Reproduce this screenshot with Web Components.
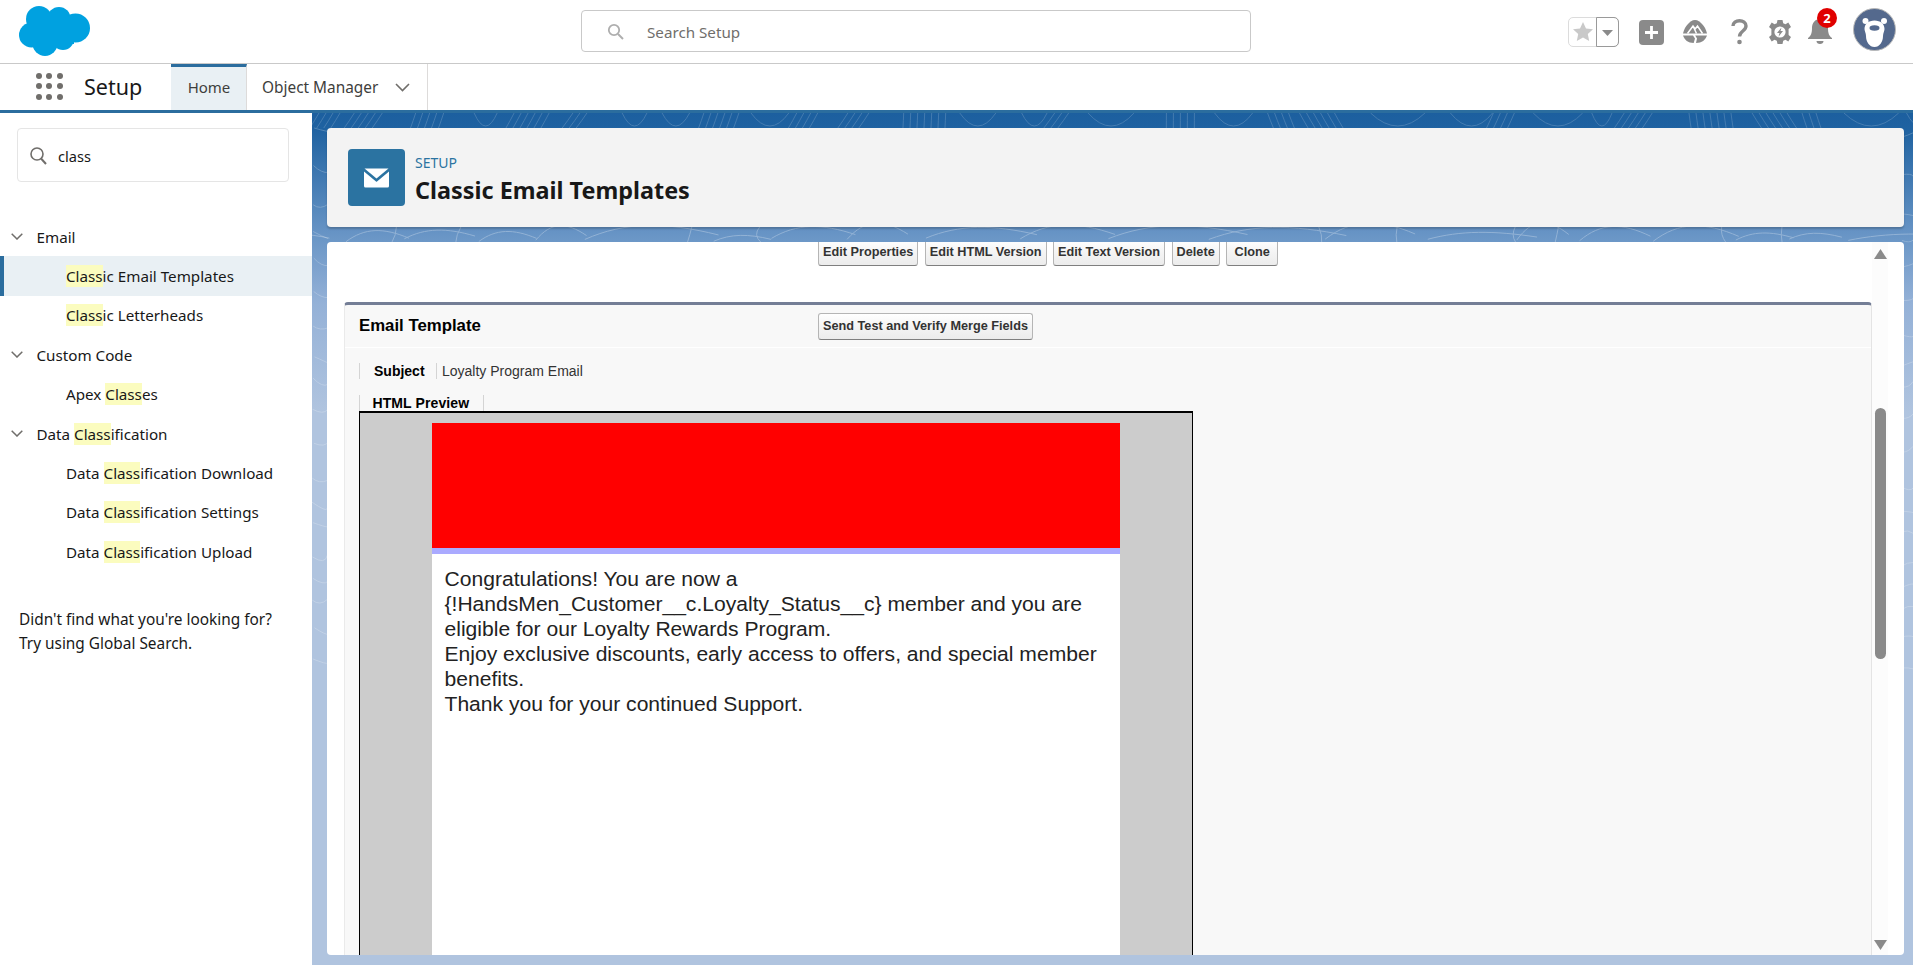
<!doctype html>
<html lang="en">
<head>
<meta charset="utf-8">
<title>Classic Email Templates</title>
<style>
  html, body { margin: 0; height: 100%; overflow: hidden; background: #fff; }
  body { font-family: "Noto Sans", "Open Sans", sans-serif; color: #181818; }
</style>
</head>
<body>
<setup-app></setup-app>
<script>
const SF_FONT = '"Noto Sans", "Open Sans", sans-serif';
const CL_FONT = '"Liberation Sans", Arial, sans-serif';

class GlobalHeader extends HTMLElement {
  constructor() {
    super();
    this.attachShadow({ mode: 'open' });
    this.shadowRoot.innerHTML = `
      <style>
        :host { display: flex; align-items: center; height: 63px; border-bottom: 1px solid #c9c9c9; position: relative; background: #fff; }
        .logo { margin-left: 19px; width: 72px; height: 50px; align-self: flex-start; margin-top: 6px; }
        .search { position: absolute; left: 581px; top: 10px; width: 670px; height: 42px; box-sizing: border-box; border: 1px solid #c9c9c9; border-radius: 4px; display: flex; align-items: center; padding: 1px 0 0 25px; color: #706e6b; font: 15.200px ${SF_FONT}; }
        .search svg { width: 17px; height: 17px; margin-right: 23px; }
        .tools { margin-left: auto; display: flex; align-items: center; margin-right: 17px; }
        .fav { display: flex; width: 51px; height: 30px; box-sizing: border-box; border: 1px solid #dcdcdc; border-radius: 5px; }
        .fav span { display: flex; align-items: center; justify-content: center; }
        .fav .s { width: 28px; }
        .fav .c { flex: 1; border: 1px solid #9a9a9a; border-radius: 0 5px 5px 0; margin: -1px; padding-top: 3px; box-sizing: border-box; }
        .tool { display: block; }
        .bell { position: relative; }
        .badge { position: absolute; left: 9px; top: -11px; width: 20px; height: 20px; border-radius: 50%; background: #e00000; color: #fff; font: 700 13px/20px ${SF_FONT}; text-align: center; }
      </style>
      <svg class="logo" viewBox="0 0 72 50"><g fill="#00a1e0"><circle cx="20" cy="13" r="13"/><circle cx="40" cy="12.500" r="11.500"/><circle cx="56.500" cy="22" r="14.500"/><circle cx="12.500" cy="29" r="12.500"/><circle cx="26" cy="37.500" r="12.500"/><circle cx="44" cy="33" r="11"/><rect x="15" y="12" width="40" height="26"/></g></svg>
      <div class="search">
        <svg viewBox="0 0 17 17"><circle cx="7" cy="7" r="5.200" fill="none" stroke="#aeaeae" stroke-width="1.800"/><path d="M11 11l5 5" stroke="#aeaeae" stroke-width="2"/></svg>
        <span>Search Setup</span>
      </div>
      <div class="tools">
        <div class="fav">
          <span class="s"><svg width="20" height="19" viewBox="0 0 20 19"><path fill="#c9c9c9" d="M10 0l3 6.500 7 .8-5.200 4.700 1.400 7L10 15.500 3.800 19l1.400-7L0 7.300l7-.8z"/></svg></span>
          <span class="c"><svg width="11" height="6" viewBox="0 0 11 6"><path fill="#8a8a8a" d="M0 0h11L5.500 6z"/></svg></span>
        </div>
        <svg class="tool" style="margin:2px 0 0 20px" width="26" height="26" viewBox="0 0 26 26"><rect width="25" height="25" rx="4" fill="#8a8a8a"/><path d="M12.500 6v13M6 12.500h13" stroke="#fff" stroke-width="2.800"/></svg>
        <svg class="tool" style="margin:0 0 0 18px" width="24" height="23" viewBox="0 0 24 23"><path fill="#8a8a8a" d="M12 0c3 0 5 2 7 4 2 2 4 5 5 9.500H0C1 9 3 6 5 4c2-2 4-4 7-4z"/><path fill="none" stroke="#fff" stroke-width="1.500" d="M4.500 13.500L10 6l2.200 3L14.500 6l5 7.500M10 6l3.500 7.500"/><path fill="#8a8a8a" d="M0 15.500h10l2 3-1.300 4.500C5 23 1.500 20 0 15.500zM14 15.500h10C22.500 20 19 23 13 23l1-4.500-1.800-3z"/></svg>
        <svg class="tool" style="margin:0 0 0 24px" width="17" height="26" viewBox="0 0 17 26"><path fill="none" stroke="#8a8a8a" stroke-width="3.400" d="M2 7c0-3.500 3-5.300 6.500-5.300S15 3.700 15 7c0 5-6.500 5-6.500 10.500"/><circle cx="8.500" cy="23" r="2.300" fill="#8a8a8a"/></svg>
        <svg class="tool" style="margin:0 0 0 21px" width="22" height="24" viewBox="0 0 22 24"><path fill="#8a8a8a" d="M8.500 0h5l.7 3.200 2.300 1L19.300 2.600l2.700 4.400-2.400 2.100v5.800l2.400 2.100-2.700 4.400-2.800-1.600-2.300 1-.7 3.200h-5l-.7-3.200-2.300-1-2.800 1.600L0 17l2.400-2.100V9.100L0 7l2.700-4.400 2.800 1.600 2.300-1z"/><circle cx="11" cy="12" r="5.600" fill="#fff"/><path fill="#8a8a8a" d="M12.500 7.500L8 13h2.500l-1 3.800L14 11h-2.500z"/></svg>
        <div class="bell" style="margin-left:17px">
          <svg class="tool" width="24" height="25" viewBox="0 0 24 25"><path fill="#8a8a8a" d="M12 0c5 0 8 4 8 9 0 5 1 8 4 10v1H0v-1c3-2 4-5 4-10 0-5 3-9 8-9z"/><path fill="#8a8a8a" d="M8.500 22h7c0 1.800-1.500 3-3.500 3s-3.500-1.200-3.500-3z"/></svg>
          <div class="badge">2</div>
        </div>
        <svg class="tool" style="margin:0 0 5px 21px" width="43" height="43" viewBox="0 0 43 43"><circle cx="21.500" cy="21.500" r="21" fill="#54698d" stroke="#b8b8b8"/><circle cx="12.500" cy="13" r="3" fill="#fff"/><circle cx="31" cy="13" r="3" fill="#fff"/><path fill="#fff" d="M21.500 12.500c6 0 10 3.500 10 8.500 0 2-1.500 4-1.500 7 0 6-3.500 11-8.500 11S13 34 13 28c0-3-1.500-5-1.500-7 0-5 4-8.500 10-8.500z"/><ellipse cx="21.500" cy="20" rx="5" ry="2.800" fill="#54698d"/></svg>
      </div>
    `;
  }
}

class NavBar extends HTMLElement {
  constructor() {
    super();
    this.attachShadow({ mode: 'open' });
    this.shadowRoot.innerHTML = `
      <style>
        :host { display: flex; height: 46px; border-bottom: 3px solid #2b6d9e; font-family: ${SF_FONT}; background: #fff; color: #3e3e3c; }
        .waffle { margin-left: 36px; width: 26.500px; height: 26.500px; margin-top: 9px; display: grid; grid-template-columns: repeat(3, 6px); gap: 4.250px; grid-auto-rows: 6px; }
        .waffle i { background: #706e6b; border-radius: 50%; }
        .app { margin-left: 21.500px; width: 87px; font-size: 21.500px; line-height: 45px; color: #181818; }
        .tab { display: flex; align-items: center; box-sizing: border-box; }
        .home { width: 76px; justify-content: center; background: #e9f0f4; border-top: 3px solid #2b6d9e; border-right: 1px solid #dddbda; font-size: 15px; padding: 0 0 4px 1px; }
        .obj { padding: 0 17px 0 15px; border-right: 1px solid #dddbda; font-size: 15.400px; }
        .obj svg { margin-left: 17px; }
      </style>
      <div class="waffle"><i></i><i></i><i></i><i></i><i></i><i></i><i></i><i></i><i></i></div>
      <div class="app">Setup</div>
      <div class="tab home">Home</div>
      <div class="tab obj">Object Manager<svg width="15" height="9" viewBox="0 0 15 9"><path d="M1 1l6.500 6.500L14 1" fill="none" stroke="#706e6b" stroke-width="1.600"/></svg></div>
    `;
  }
}

class TreeHead extends HTMLElement {
  constructor() {
    super();
    this.attachShadow({ mode: 'open' });
    this.shadowRoot.innerHTML = `
      <style>
        :host { display: flex; align-items: center; height: 39.400px; padding-left: 11px; font-size: 15.200px; color: #181818; }
        svg { margin-right: 13.500px; }
      </style>
      <svg width="12" height="7" viewBox="0 0 12 7"><path d="M.7.7L6 6l5.300-5.300" fill="none" stroke="#706e6b" stroke-width="1.500"/></svg>
      <span><slot></slot></span>
    `;
  }
}

class TreeLeaf extends HTMLElement {
  constructor() {
    super();
    this.attachShadow({ mode: 'open' });
    this.shadowRoot.innerHTML = `
      <style>
        :host { display: flex; align-items: center; height: 39.400px; padding-left: 66px; font-size: 15.200px; color: #181818; box-sizing: border-box; }
        :host([active]) { background: #e9f0f4; border-left: 4px solid #2b6d9e; padding-left: 62px; }
      </style>
      <span><slot></slot></span>
    `;
  }
}

class SideBar extends HTMLElement {
  constructor() {
    super();
    this.attachShadow({ mode: 'open' });
    this.shadowRoot.innerHTML = `
      <style>
        :host { display: block; width: 312px; flex: none; background: #fff; font-family: ${SF_FONT}; }
        .find { margin: 15px 23px 0 17px; height: 54px; box-sizing: border-box; border: 1px solid #e5e5e5; border-radius: 4px; display: flex; align-items: center; padding: 2px 0 0 12px; font-size: 14.600px; color: #181818; }
        .find svg { margin-right: 11px; }
        .tree { margin-top: 35px; }
        .help { margin: 36px 0 0 19px; font-size: 15.400px; line-height: 24px; color: #181818; }
      </style>
      <div class="find">
        <svg width="17" height="18" viewBox="0 0 17 18"><circle cx="7" cy="7" r="6" fill="none" stroke="#706e6b" stroke-width="1.600"/><path d="M11 11.500l5 5.500" stroke="#706e6b" stroke-width="2"/></svg>
        <span>class</span>
      </div>
      <div class="tree"><slot></slot></div>
      <div class="help">Didn't find what you're looking for?<br>Try using Global Search.</div>
    `;
  }
}

class PageHeader extends HTMLElement {
  constructor() {
    super();
    this.attachShadow({ mode: 'open' });
    this.shadowRoot.innerHTML = `
      <style>
        :host { display: flex; align-items: center; height: 99px; box-sizing: border-box; background: #f3f3f3; border-radius: 4px; padding-left: 21px; box-shadow: 0 2px 2px rgba(0,0,0,.2); font-family: ${SF_FONT}; }
        .icon { width: 57px; height: 57px; border-radius: 4px; background: #2b73a1; display: flex; align-items: center; justify-content: center; margin-right: 10px; }
        .text { padding-top: 3px; }
        .kicker { font-size: 14px; line-height: 18px; color: #2b73a1; margin-top: 1px; }
        h1 { margin: 3px 0 0; font-size: 23.400px; line-height: 30px; font-weight: 700; color: #181818; }
      </style>
      <div class="icon"><svg width="25" height="20" viewBox="0 0 25 20"><path fill="#fff" d="M0 3.500V18q0 1.500 1.500 1.500h22Q25 19.500 25 18V3.500L13 13.500q-.5.400-1 0z"/><path fill="#fff" d="M.5.500h24L12.500 10.500z"/></svg></div>
      <div class="text">
        <div class="kicker">SETUP</div>
        <h1>Classic Email Templates</h1>
      </div>
    `;
  }
}

class ClassicButton extends HTMLElement {
  constructor() {
    super();
    this.attachShadow({ mode: 'open' });
    this.shadowRoot.innerHTML = `
      <style>
        :host { display: inline-block; box-sizing: border-box; height: 27px; padding: 0 4px; text-align: center; border: 1px solid #b5b5b5; border-bottom-color: #7f7f7f; border-radius: 3px; background: linear-gradient(#fff, #f4f4f4 50%, #ececec); color: #333; font: 700 12.700px/25px ${CL_FONT}; white-space: nowrap; }
      </style>
      <slot></slot>
    `;
  }
}

class ScrollRail extends HTMLElement {
  constructor() {
    super();
    this.attachShadow({ mode: 'open' });
    this.shadowRoot.innerHTML = `
      <style>
        :host { display: flex; flex-direction: column; align-items: center; width: 16px; flex: none; background: #fcfcfc; box-sizing: border-box; padding: 7px 0 5px; }
        .gap1 { height: 149px; flex: none; }
        .gap2 { flex: 1; }
        .thumb { width: 11px; height: 251px; flex: none; border-radius: 6px; background: #8a8a8a; }
        svg { flex: none; display: block; }
      </style>
      <svg width="13" height="10" viewBox="0 0 13 10"><path fill="#8a8a8a" d="M6.500 0L13 10H0z"/></svg>
      <div class="gap1"></div>
      <div class="thumb"></div>
      <div class="gap2"></div>
      <svg width="13" height="10" viewBox="0 0 13 10"><path fill="#8a8a8a" d="M0 0h13L6.500 10z"/></svg>
    `;
  }
}

class EmailTemplate extends HTMLElement {
  constructor() {
    super();
    this.attachShadow({ mode: 'open' });
    this.shadowRoot.innerHTML = `
      <style>
        :host { display: flex; flex-direction: column; flex: 1; min-height: 0; background: #f8f8f8; border-top: 3px solid #747e96; border-left: 1px solid #eaeaea; border-right: 1px solid #e4e4e4; border-radius: 4px 4px 0 0; font-family: ${CL_FONT}; color: #000; }
        .title { display: flex; align-items: center; height: 42px; border-bottom: 1px solid #fff; flex: none; box-sizing: content-box; }
        h2 { margin: 0 0 0 14px; width: 459px; font-size: 16.800px; font-weight: 700; color: #000; flex: none; }
        .row { display: flex; align-items: center; margin: 15px 0 0 14px; height: 16px; flex: none; }
        .label { height: 16px; border-left: 1px solid #d4d4d4; border-right: 1px solid #d4d4d4; font-size: 14px; font-weight: 700; line-height: 17px; box-sizing: border-box; width: 78px; padding-left: 14px; }
        .val { margin-left: 5px; color: #333; font-size: 14px; }
        .tabrow { margin: 16px 0 0 14px; height: 16px; flex: none; display: flex; }
        .tabrow span { border-left: 1px solid #d4d4d4; border-right: 1px solid #d4d4d4; font-size: 14px; font-weight: 700; line-height: 17px; padding: 0 14px 0 12.500px; letter-spacing: .1px; }
        .preview { margin-left: 14px; width: 834px; flex: 1; min-height: 0; background: #ccc; box-sizing: border-box; border: 1px solid #000; border-top-width: 2px; border-bottom: 0; padding: 10px 0 0 72px; display: flex; flex-direction: column; overflow: hidden; }
        .mail { width: 688px; flex: 1; background: #fff; }
        .banner { height: 125px; background: #f00; }
        .rule { height: 6px; background: #aaf; }
        .body { padding: 12px 12px 0 12.500px; font-size: 21.080px; line-height: 25px; color: #222; }
      </style>
      <div class="title"><h2>Email Template</h2><classic-button>Send Test and Verify Merge Fields</classic-button></div>
      <div class="row"><div class="label">Subject</div><div class="val">Loyalty Program Email</div></div>
      <div class="tabrow"><span>HTML Preview</span></div>
      <div class="preview">
        <div class="mail">
          <div class="banner"></div>
          <div class="rule"></div>
          <div class="body">Congratulations! You are now a {!HandsMen_Customer__c.Loyalty_Status__c} member and you are eligible for our Loyalty Rewards Program.<br>Enjoy exclusive discounts, early access to offers, and special member benefits.<br>Thank you for your continued Support.</div>
        </div>
      </div>
    `;
  }
}

class TopoBackdrop extends HTMLElement {
  constructor() {
    super();
    this.attachShadow({ mode: 'open' });
    // contour lines of the setup wallpaper, only the strips between the cards show
    let seed = 7;
    const rnd = (n) => { seed = (seed * 9301 + 49297) % 233280; return seed / 233280 * n; };
    let top = '';
    for (let x = 0; x < 1601; ) {
      if (rnd(1) < .6) {
        // hatch of near parallel strokes
        const n = 3 + Math.floor(rnd(5)), lean = rnd(24) - 12;
        for (let i = 0; i < n; i++) top += `<path d="M${x + i * 7} 0q${lean / 2} 8 ${lean} 15"/>`;
        x += n * 7 + rnd(30);
      } else {
        const w = 20 + rnd(40);
        top += `<path d="M${x} 0q${w / 2} 26 ${w} 0"/>`;
        x += w + rnd(34);
      }
    }
    let mid = '';
    for (let x = -40; x < 1601; ) {
      const w = 50 + rnd(90), h = 4 + rnd(10);
      mid += `<path d="M${x} ${129 - rnd(4)}c${w * .3} ${-h * 1.6} ${w * .6} ${-h * 1.6} ${w} ${-h * .4}"/>`;
      if (rnd(1) < .4) mid += `<path d="M${x + w * .8} 114q${rnd(14) - 7} 8 ${rnd(10) - 5} 15"/>`;
      x += w * .7 + rnd(40);
    }
    let side = '';
    for (let y = 15; y < 560; y += 20 + rnd(24)) {
      side += `<path d="M${rnd(3)} ${y}q${6 + rnd(10)} ${4 + rnd(6)} 15 ${rnd(10) - 2}"/>`;
      side += `<path d="M1590 ${y + 9}q${4 + rnd(6)} ${rnd(10) - 5} 11 ${rnd(8) - 6}"/>`;
    }
    this.shadowRoot.innerHTML = `
      <style>
        :host { position: absolute; inset: 0; display: block; background: linear-gradient(#1c5f9f 0, #1f62a1 16px, #6794c5 120px, #94b1d7 190px, #b0c4df 300px, #b0c4df 100%); overflow: hidden; }
        svg { position: absolute; left: 0; top: 0; }
        path { fill: none; stroke: #fff; stroke-width: 1; }
        .top { opacity: .17; }
        .mid { opacity: .28; }
        .side { opacity: .22; }
      </style>
      <svg width="1601" height="852" viewBox="0 0 1601 852">
        <g class="top">${top}</g>
        <g class="mid">${mid}</g>
        <g class="side">${side}</g>
      </svg>
    `;
  }
}

class SetupApp extends HTMLElement {
  constructor() {
    super();
    this.attachShadow({ mode: 'open' });
    this.shadowRoot.innerHTML = `
      <style>
        :host { display: flex; flex-direction: column; height: 965px; width: 1913px; }
        .body { display: flex; flex: 1; min-height: 0; }
        main { flex: 1; position: relative; display: flex; flex-direction: column; padding: 15px 9px 10px 15px; min-width: 0; }
        main > page-header { position: relative; }
        .panel { position: relative; margin-top: 15px; flex: 1; min-height: 0; background: #fff; border-radius: 4px; display: flex; overflow: hidden; padding-right: 16px; }
        .content { flex: 1; min-width: 0; display: flex; flex-direction: column; padding-left: 17px; }
        .actions { flex: none; display: flex; height: 63px; padding-left: 474px; margin-top: -3px; }
        .actions classic-button + classic-button { margin-left: 6.500px; }
        .delete { width: 48px; }
        .clone { width: 52px; }
      </style>
      <global-header></global-header>
      <nav-bar></nav-bar>
      <div class="body">
        <side-bar><slot name="tree"></slot></side-bar>
        <main>
          <topo-backdrop></topo-backdrop>
          <page-header></page-header>
          <div class="panel">
            <div class="content">
              <div class="actions">
                <classic-button>Edit Properties</classic-button>
                <classic-button>Edit HTML Version</classic-button>
                <classic-button>Edit Text Version</classic-button>
                <classic-button class="delete">Delete</classic-button>
                <classic-button class="clone">Clone</classic-button>
              </div>
              <email-template></email-template>
            </div>
            <scroll-rail></scroll-rail>
          </div>
        </main>
      </div>
    `;
  }
}

customElements.define('global-header', GlobalHeader);
customElements.define('nav-bar', NavBar);
customElements.define('tree-head', TreeHead);
customElements.define('tree-leaf', TreeLeaf);
customElements.define('side-bar', SideBar);
customElements.define('page-header', PageHeader);
customElements.define('classic-button', ClassicButton);
customElements.define('scroll-rail', ScrollRail);
customElements.define('email-template', EmailTemplate);
customElements.define('topo-backdrop', TopoBackdrop);
customElements.define('setup-app', SetupApp);

const mark = (s) => s.replace(/\[(.+?)\]/g, '<mark style="background:#fbfcbf;color:inherit;padding:1px 0">$1</mark>');
const tree = [
  ['h', 'Email'],
  ['a', '[Class]ic Email Templates'],
  ['l', '[Class]ic Letterheads'],
  ['h', 'Custom Code'],
  ['l', 'Apex [Class]es'],
  ['h', 'Data [Class]ification'],
  ['l', 'Data [Class]ification Download'],
  ['l', 'Data [Class]ification Settings'],
  ['l', 'Data [Class]ification Upload'],
];
const app = document.querySelector('setup-app');
for (const [kind, text] of tree) {
  const el = document.createElement(kind === 'h' ? 'tree-head' : 'tree-leaf');
  if (kind === 'a') el.setAttribute('active', '');
  el.slot = 'tree';
  el.innerHTML = mark(text);
  app.appendChild(el);
}
</script>
</body>
</html>
